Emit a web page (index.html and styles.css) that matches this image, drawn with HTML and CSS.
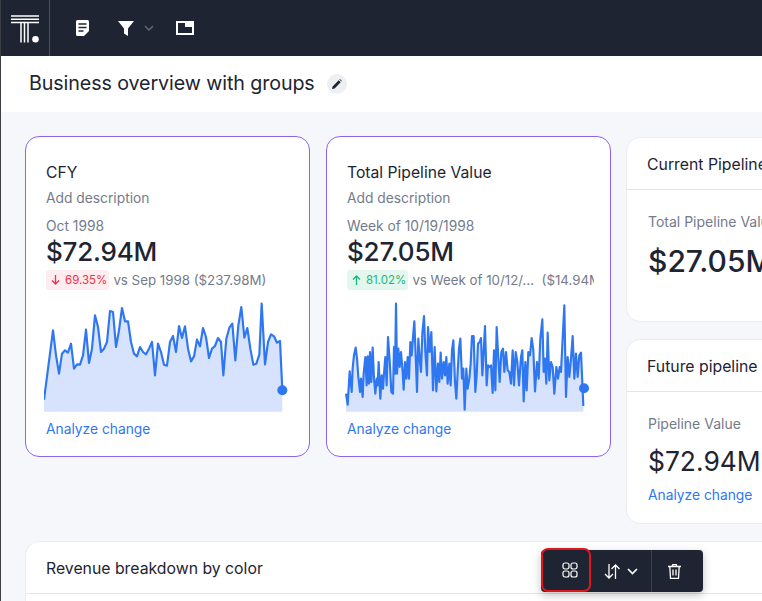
FILE: index.html
```html
<!DOCTYPE html>
<html lang="en">
<head>
    <meta charset="UTF-8">
    <meta name="viewport" content="width=device-width, initial-scale=1.0">
    <title>Business overview with groups</title>
    <link rel="stylesheet" href="styles.css">
</head>
<body>
    <header class="topbar">
        <div class="logo">
            <svg width="30" height="30" viewBox="0 0 30 30">
                <path d="M1 3h28M1 6.300h28M1 9.500h28M11 9.500v20M14.500 9.500v20M18 9.500v20" stroke="#fff" stroke-width="1.500" fill="none"/>
                <circle cx="25.500" cy="26.300" r="3.300" fill="#fff"/>
            </svg>
        </div>
        <div class="tools">
            <svg class="tool-doc" width="13" height="16" viewBox="0 0 13 16">
                <path d="M1.500 0h10A1.500 1.500 0 0 1 13 1.500V11l-5 5H1.500A1.500 1.500 0 0 1 0 14.500v-13A1.500 1.500 0 0 1 1.500 0z" fill="#fff"/>
                <path d="M2.500 4h8M2.500 7.500h8M2.500 11h5" stroke="#1e2431" stroke-width="1.300"/>
            </svg>
            <svg class="tool-filter" width="16" height="15" viewBox="0 0 16 15">
                <path d="M0 0h16L10 7.500V15L6 12.500V7.500z" fill="#fff"/>
            </svg>
            <svg class="tool-caret" width="10" height="6" viewBox="0 0 10 6">
                <path d="M1 1l4 4 4-4" stroke="#5f6675" stroke-width="1.500" fill="none"/>
            </svg>
            <svg class="tool-tab" width="18" height="14" viewBox="0 0 18 14">
                <path d="M1 1h9v4h7v8H1z" fill="none" stroke="#fff" stroke-width="2"/>
                <path d="M10 0h8v5h-8z" fill="#fff"/>
            </svg>
        </div>
    </header>

    <div class="title-row">
        <h1>Business overview with groups</h1>
        <span class="edit-btn">
            <svg width="10" height="10" viewBox="0 0 10 10"><path d="M0 10l.6-2.600L6.700 1.300l2 2L2.600 9.400zM7.400.6l.6-.5 1.900 1.900-.5.600z" fill="#1e2431"/></svg>
        </span>
    </div>

    <main class="content">
        <div class="top-grid">
            <section class="card kpi">
                <h3>CFY</h3>
                <p class="desc">Add description</p>
                <p class="period">Oct 1998</p>
                <p class="value">$72.94M</p>
                <div class="change">
                    <span class="badge down">
                        <svg width="9" height="10" viewBox="0 0 9 10"><path d="M4.500 0v9M1 5.500L4.500 9 8 5.500" fill="none" stroke="#f0304a" stroke-width="1.300"/></svg>
                        69.35%
                    </span>
                    <span class="vs">vs Sep 1998 ($237.98M)</span>
                </div>
                <svg class="spark" width="244" height="112" viewBox="72 20 732 336">
                    <polygon class="area" points="72,313 99,105 108,180 117,235 126,175 135,165 144,172 153,145 162,220 171,207 180,208 189,180 198,103 207,203 216,160 225,60 234,95 243,170 252,160 261,140 270,47 279,50 288,155 297,105 306,38 315,78 324,78 333,140 342,175 351,183 360,155 369,170 378,177 387,160 396,140 405,240 414,145 423,170 432,208 441,211 450,140 459,122 468,170 477,92 486,128 495,93 504,160 513,198 522,183 531,133 540,153 549,98 558,125 567,188 576,160 585,152 594,128 603,140 610,240 619,130 628,97 637,85 646,195 655,90 664,35 673,127 682,98 691,160 700,208 709,205 718,178 725,25 735,207 744,140 753,117 762,123 771,142 780,137 787,285 787,349 72,349"/>
                    <polyline class="line" points="72,313 99,105 108,180 117,235 126,175 135,165 144,172 153,145 162,220 171,207 180,208 189,180 198,103 207,203 216,160 225,60 234,95 243,170 252,160 261,140 270,47 279,50 288,155 297,105 306,38 315,78 324,78 333,140 342,175 351,183 360,155 369,170 378,177 387,160 396,140 405,240 414,145 423,170 432,208 441,211 450,140 459,122 468,170 477,92 486,128 495,93 504,160 513,198 522,183 531,133 540,153 549,98 558,125 567,188 576,160 585,152 594,128 603,140 610,240 619,130 628,97 637,85 646,195 655,90 664,35 673,127 682,98 691,160 700,208 709,205 718,178 725,25 735,207 744,140 753,117 762,123 771,142 780,137 787,285"/>
                    <circle class="dot" cx="787" cy="285" r="15"/>
                </svg>
                <a class="analyze">Analyze change</a>
            </section>

            <section class="card kpi">
                <h3>Total Pipeline Value</h3>
                <p class="desc">Add description</p>
                <p class="period">Week of 10/19/1998</p>
                <p class="value">$27.05M</p>
                <div class="change">
                    <span class="badge up">
                        <svg width="9" height="10" viewBox="0 0 9 10"><path d="M4.500 10V1M1 4.500L4.500 1 8 4.500" fill="none" stroke="#17b978" stroke-width="1.300"/></svg>
                        81.02%
                    </span>
                    <span class="vs">vs Week of 10/12/…&nbsp; ($14.94M)</span>
                </div>
                <svg class="spark" width="244" height="112" viewBox="72 20 732 336">
                    <polygon class="area" points="75,295 80,328 86,228 92,290 95,218 99,180 104,157 108,190 112,245 117,290 120,250 125,305 128,235 133,185 137,270 140,183 144,265 147,170 151,260 155,157 159,250 163,295 167,250 170,270 173,200 178,310 182,240 186,280 189,235 193,185 197,270 201,125 206,195 211,290 216,295 219,155 222,235 225,25 228,235 232,160 236,215 240,170 245,230 248,283 252,200 256,250 260,185 264,250 268,140 272,180 276,125 280,78 284,180 288,290 292,130 296,190 300,230 304,115 309,62 313,170 318,240 321,95 326,170 331,110 336,285 341,155 346,288 351,205 355,260 359,172 363,250 368,200 372,240 376,185 380,265 385,205 389,270 393,165 397,135 402,260 406,310 410,230 414,160 418,130 423,250 427,220 431,343 436,220 440,280 445,250 449,205 453,122 458,122 463,290 467,240 471,145 476,140 480,128 484,240 488,170 492,92 497,270 501,210 506,215 510,210 515,293 519,165 523,285 527,95 531,170 536,260 541,170 546,160 550,230 555,170 560,225 565,230 570,265 575,165 579,270 584,170 589,200 594,270 600,185 604,165 608,318 613,200 617,285 622,170 627,180 632,128 637,165 642,288 648,200 653,250 658,130 664,72 668,230 672,190 676,265 680,112 685,255 690,200 695,215 700,295 706,215 711,250 716,215 720,230 725,130 730,30 735,305 740,185 745,245 750,190 755,122 760,250 765,175 770,245 775,180 780,172 787,332 787,349 75,349"/>
                    <polyline class="line" points="75,295 80,328 86,228 92,290 95,218 99,180 104,157 108,190 112,245 117,290 120,250 125,305 128,235 133,185 137,270 140,183 144,265 147,170 151,260 155,157 159,250 163,295 167,250 170,270 173,200 178,310 182,240 186,280 189,235 193,185 197,270 201,125 206,195 211,290 216,295 219,155 222,235 225,25 228,235 232,160 236,215 240,170 245,230 248,283 252,200 256,250 260,185 264,250 268,140 272,180 276,125 280,78 284,180 288,290 292,130 296,190 300,230 304,115 309,62 313,170 318,240 321,95 326,170 331,110 336,285 341,155 346,288 351,205 355,260 359,172 363,250 368,200 372,240 376,185 380,265 385,205 389,270 393,165 397,135 402,260 406,310 410,230 414,160 418,130 423,250 427,220 431,343 436,220 440,280 445,250 449,205 453,122 458,122 463,290 467,240 471,145 476,140 480,128 484,240 488,170 492,92 497,270 501,210 506,215 510,210 515,293 519,165 523,285 527,95 531,170 536,260 541,170 546,160 550,230 555,170 560,225 565,230 570,265 575,165 579,270 584,170 589,200 594,270 600,185 604,165 608,318 613,200 617,285 622,170 627,180 632,128 637,165 642,288 648,200 653,250 658,130 664,72 668,230 672,190 676,265 680,112 685,255 690,200 695,215 700,295 706,215 711,250 716,215 720,230 725,130 730,30 735,305 740,185 745,245 750,190 755,122 760,250 765,175 770,245 775,180 780,172 787,332"/>
                    <circle class="dot" cx="789" cy="279" r="15"/>
                </svg>
                <a class="analyze">Analyze change</a>
            </section>

            <div class="side">
                <section class="card headed current">
                    <h3 class="card-head">Current Pipeline</h3>
                    <div class="card-body">
                        <p class="label">Total Pipeline Value</p>
                        <p class="big">$27.05M</p>
                    </div>
                </section>
                <section class="card headed future">
                    <h3 class="card-head">Future pipeline</h3>
                    <div class="card-body">
                        <p class="label">Pipeline Value</p>
                        <p class="big">$72.94M</p>
                        <a class="analyze">Analyze change</a>
                    </div>
                </section>
            </div>
        </div>

        <section class="card headed bottom">
            <h3 class="card-head">Revenue breakdown by color</h3>
        </section>
    </main>

    <div class="float-bar">
        <button class="bar-btn selected">
            <svg width="16" height="16" viewBox="0 0 16 16" fill="none" stroke="#fff" stroke-width="1.200">
                <rect x="1" y="1" width="6" height="6" rx="2"/><rect x="9" y="1" width="6" height="6" rx="2"/>
                <rect x="1" y="9" width="6" height="6" rx="2"/><rect x="9" y="9" width="6" height="6" rx="2"/>
            </svg>
        </button>
        <button class="bar-btn sort">
            <svg width="16" height="15" viewBox="0 0 16 15" fill="none" stroke="#fff" stroke-width="1.300">
                <path d="M5 0v14M1 10l4 4 4-4M11.500 15V1M7.500 5l4-4 4 4"/>
            </svg>
            <svg width="11" height="7" viewBox="0 0 11 7" fill="none" stroke="#fff" stroke-width="1.700"><path d="M1 1l4.500 4.500L10 1"/></svg>
        </button>
        <button class="bar-btn trash">
            <svg width="13" height="15" viewBox="0 0 13 15" fill="none" stroke="#fff" stroke-width="1.300">
                <path d="M0 2.500h13M4 2.500l.8-1.800h3.400L9 2.500M1.800 2.500l.7 11.800h8l.7-11.800M5 5.500v6M8 5.500v6"/>
            </svg>
        </button>
    </div>
</body>
</html>
```

FILE: styles.css
```css
* {
    box-sizing: border-box;
}

html,
body {
    height: 100%;
}

body {
    margin: 0;
    overflow: hidden;
    background-color: #f6f7fa;
    color: #1e2431;
    font-family: Inter, "Liberation Sans", sans-serif;
}

/* thin dark edge of the window behind the page */
body::before {
    content: "";
    position: absolute;
    left: 0;
    top: 0;
    bottom: 0;
    width: 1px;
    background-color: #3c3f46;
}

h1,
h3,
p {
    margin: 0;
    font-weight: 400;
}

.topbar {
    display: flex;
    height: 56px;
    background-color: #1e2431;
}

.logo {
    display: flex;
    align-items: center;
    justify-content: center;
    width: 50px;
    border-right: 1px solid #4a505c;
}

.tools {
    display: flex;
    align-items: center;
    padding-left: 26px;
}

.tool-filter {
    margin-left: 29px;
}

.tool-caret {
    margin-left: 10px;
}

.tool-tab {
    margin-left: 22px;
}

.title-row {
    display: flex;
    align-items: center;
    gap: 12px;
    height: 56px;
    padding: 0 0 2px 29px;
    background-color: white;
}

h1 {
    font-size: 19.7px;
    letter-spacing: -0.1px;
}

.edit-btn {
    display: flex;
    align-items: center;
    justify-content: center;
    width: 20px;
    height: 20px;
    margin-top: 2px;
    border-radius: 50%;
    background-color: #eeeff3;
}

.content {
    display: flex;
    flex-direction: column;
    gap: 17px;
    width: 950px;
    padding: 24px 0 0 25px;
}

.top-grid {
    display: flex;
    gap: 16px;
}

.card {
    flex-shrink: 0;
    background-color: white;
    border: 1px solid #eaecf1;
    border-radius: 14px;
}

.kpi {
    display: flex;
    flex-direction: column;
    align-items: flex-start;
    width: 285px;
    height: 321px;
    padding: 26px 16px 0 20px;
    border-color: #8b63ee;
}

.kpi h3 {
    font-size: 15.7px;
    line-height: 20px;
}

.desc,
.period {
    font-size: 13.8px;
    line-height: 18px;
    color: #747b8b;
}

.desc {
    margin-top: 6px;
}

.period {
    margin-top: 10px;
}

.value {
    margin-top: 1px;
    font-size: 26px;
    line-height: 32px;
    font-weight: 500;
    letter-spacing: -0.2px;
}

.change {
    display: flex;
    align-items: center;
    gap: 4px;
    width: 100%;
    height: 21px;
    margin-top: 1px;
    overflow: hidden;
    white-space: nowrap;
    font-size: 13.3px;
}

.badge {
    display: flex;
    align-items: center;
    gap: 5px;
    height: 20px;
    padding: 0 2px 0 5px;
    border-radius: 3px;
    font-size: 11.5px;
}

.badge.down {
    background-color: #feecee;
    color: #f0304a;
}

.badge.up {
    background-color: #e3f7ee;
    color: #17b978;
}

.vs {
    color: #747b8b;
}

.spark {
    display: block;
    flex-shrink: 0;
    margin: 12px 0 0 -2px;
}

.area {
    fill: #d7e3fc;
}

.line {
    fill: none;
    stroke: #2f77f0;
    stroke-width: 6.5;
    stroke-linejoin: round;
}

.dot {
    fill: #2f77f0;
}

.analyze {
    font-size: 13.8px;
    line-height: 18px;
    color: #2f77f0;
}

.kpi .analyze {
    margin-top: 6px;
}

.side {
    display: flex;
    flex-direction: column;
    gap: 17px;
    flex-shrink: 0;
    width: 285px;
    margin-left: -1px;
}

.card-head {
    display: flex;
    align-items: center;
    height: 52px;
    padding: 2px 0 0 20px;
    font-size: 15.8px;
    border-bottom: 1px solid #e2e3ed;
}

.current {
    height: 185px;
    margin-top: 1px;
}

.future {
    height: 185px;
}

.card-body {
    padding: 23px 20px 0 21px;
}

.label {
    font-size: 14px;
    line-height: 18px;
    color: #747b8b;
}

.big {
    margin-top: 12px;
    font-size: 30px;
    line-height: 36px;
    font-weight: 500;
    white-space: nowrap;
}

.future .big {
    margin-top: 10px;
    font-size: 26.4px;
    font-weight: 400;
}

.future .analyze {
    display: block;
    margin-top: 7px;
}

.bottom {
    width: 800px;
    height: 120px;
}

.float-bar {
    position: absolute;
    left: 541px;
    top: 550px;
    display: flex;
    height: 42px;
    border-radius: 4px;
    background-color: #1e2431;
    box-shadow: 0 3px 8px rgba(0, 0, 0, 0.25);
}

.bar-btn {
    display: flex;
    align-items: center;
    justify-content: center;
    height: 100%;
    padding: 0;
    background: none;
    border: none;
    border-right: 1px solid #3a404d;
}

.bar-btn.selected {
    width: 50px;
    height: 44px;
    margin-top: -2px;
    padding-left: 8px;
    border: 2px solid #e0161e;
    border-radius: 7px;
}

.bar-btn.sort {
    gap: 7px;
    width: 61px;
}

.bar-btn.trash {
    width: 51px;
    padding-right: 6px;
    border-right: none;
}
```
